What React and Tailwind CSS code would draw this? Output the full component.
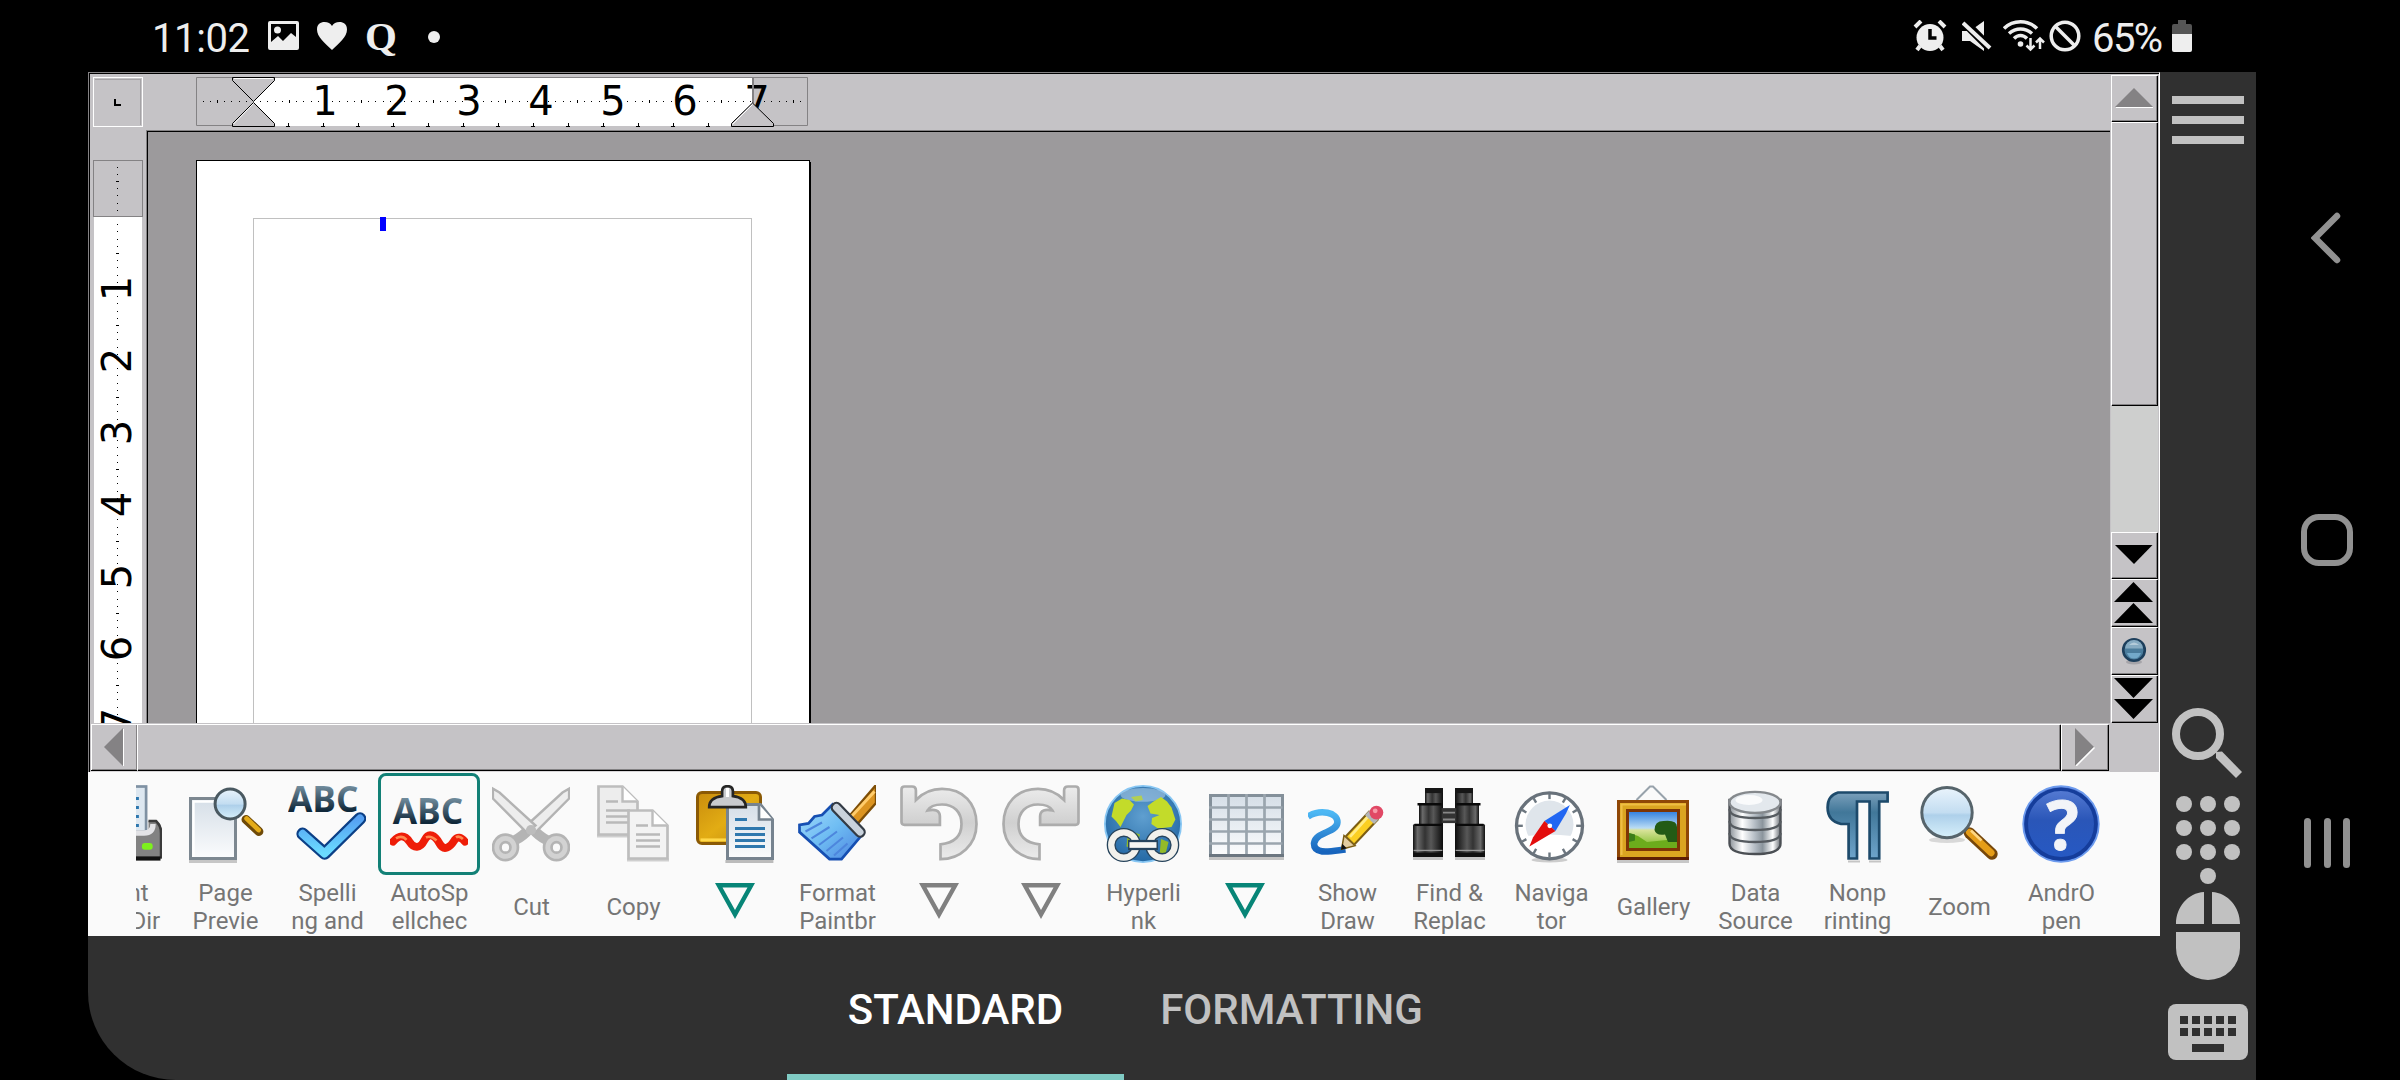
import React from "react";

const range = (n) => Array.from({ length: n }, (_, i) => i);

/* ---------- status bar ---------- */

function StatusBar() {
  return (
    <div className="flex h-[72px] w-full shrink-0 items-center pl-[152px] pr-[64px] text-[40px] leading-none text-[#eeeeee]">
      <span className="mt-[5px] w-[98px] tracking-[-0.4px]">11:02</span>
      <svg className="ml-[17px]" width="33" height="30" viewBox="0 0 33 30">
        <path fillRule="evenodd" fill="#eee" d="M3 0h27q2 0 2 2v25q0 2-2 2H3q-2 0-2-2V2q0-2 2-2zM4 3v18l7-6 5 5 8-8 5 4V3z" />
        <circle cx="10.500" cy="9" r="3.500" fill="#eee" />
      </svg>
      <svg className="ml-[16px]" width="32" height="30" viewBox="0 0 32 30">
        <path fill="#eee" d="M16 29C9 22 1 16 1 8.500C1 3 4.500 1 8.500 1c3.500 0 6 1.500 7.500 4C17.500 2.500 20 1 23.500 1 27.500 1 31 3 31 8.500 31 16 23 22 16 29z" />
      </svg>
      <span className="ml-[17px] w-[34px] font-['Liberation_Serif'] text-[41px] font-bold leading-none text-[#eeeeee]">Q</span>
      <span className="ml-[29px] mt-px h-[12px] w-[12px] rounded-full bg-[#eeeeee]" />
      <div className="flex-1" />
      <svg width="34" height="32" viewBox="0 0 34 32">
        <circle cx="17" cy="17.500" r="13.500" fill="#eee" />
        <path d="M2 7l6-6M26 1l6 6M7 26l-3 4M27 26l3 4" stroke="#eee" strokeWidth="4" />
        <path d="M17 9v9h6.500" stroke="#000" strokeWidth="3.500" fill="none" />
      </svg>
      <svg className="ml-[15px]" width="30" height="32" viewBox="0 0 30 32">
        <path fill="#eee" d="M0 11h8L22 1v30L8 21H0z" />
        <path d="M0 0l29 29" stroke="#000" strokeWidth="9" />
        <path d="M1 3l27 25" stroke="#eee" strokeWidth="4" />
      </svg>
      <svg className="ml-[11px]" width="42" height="32" viewBox="0 0 42 32">
        <g fill="none" stroke="#eee" strokeWidth="3.500">
          <path d="M1 8.500C10-.5 25-.5 34 8.500" />
          <path d="M6 13.500c7-6 16-6 23 0" />
          <path d="M11 18.500c4-4 9-4 13 0" />
        </g>
        <circle cx="17.500" cy="24" r="2.800" fill="#eee" />
        <g fill="none" stroke="#eee" strokeWidth="2.500">
          <path d="M27.500 18v11M23.500 25.500l4 4 4-4" />
          <path d="M37 29V19M33 22.500l4-4 4 4" />
        </g>
      </svg>
      <svg className="ml-[4px]" width="32" height="32" viewBox="0 0 32 32">
        <circle cx="16" cy="16" r="13.800" fill="none" stroke="#eee" strokeWidth="3.500" />
        <path d="M6 6l20 20" stroke="#eee" strokeWidth="3.500" />
      </svg>
      <span className="ml-[11px] mt-[5px] w-[73px] tracking-[-1.600px]">65%</span>
      <svg className="ml-[7px]" width="20" height="32" viewBox="0 0 20 32">
        <path fill="#555" d="M6 0h8v4h4q2 0 2 2v8H0V6q0-2 2-2h4z" />
        <path fill="#eee" d="M0 14h20v16q0 2-2 2H2q-2 0-2-2z" />
      </svg>
    </div>
  );
}

/* ---------- rulers ---------- */

function HorizontalRuler() {
  return (
    <svg className="ml-[53px] mt-[3px]" width="613" height="50" viewBox="196 77 613 50">
      <path d="M196.500 77.500H807.500V125.500H196.500z" fill="none" stroke="#848284" />
      <rect x="253" y="78" width="499" height="48" fill="#fff" />
      <rect x="752" y="77" width="2" height="26" fill="#848284" />
      {range(85).map((i) => {
        const k = i - 7;
        if (k % 10 === 0) return null;
        const half = Math.abs(k % 10) === 5;
        const x = Math.round(253 + k * 7.2);
        if (x > 806) return null;
        return <rect key={i} x={x} y={half ? 100 : 101} width="1" height={half ? 3 : 1} fill="#000" />;
      })}
      <g fontFamily="DejaVu Sans" fontSize="40" textAnchor="middle" fill="#000">
        {range(7).map((i) => (
          <text key={i} x={325 + i * 72} y="115">{i + 1}</text>
        ))}
      </g>
      <rect x="752" y="77" width="2" height="26" fill="#848284" />
      {range(14).map((i) => (
        <path key={i} d={`M${Math.round(286 + i * 35)} 126.500h4M${Math.round(286 + i * 35) + 2.5} 123v3`} stroke="#000" />
      ))}
      <g fill="#c5c3c6" stroke="#000">
        <path d="M232.500 77.500H274.500V80.500L253.500 101.500 232.500 80.500z" />
        <path d="M253.500 102.500L274.500 123.500V126.500H232.500V123.500z" />
        <path d="M752.500 103L773.500 123.500V126.500H731.500V123.500z" />
      </g>
      <path d="M234 78.500H273M253.500 103.500L233.500 124M752.500 104.500L732.500 124.500" stroke="#fff" fill="none" />
    </svg>
  );
}

function VerticalRuler() {
  return (
    <div className="h-[593px] w-[56px] shrink-0 overflow-hidden bg-[#c5c3c6] pl-[3px] pt-[30px]">
      <svg width="50" height="563" viewBox="93 160 50 563">
        <rect x="94" y="216" width="48" height="520" fill="#fff" />
        <rect x="93.500" y="160.500" width="49" height="56" fill="#c5c3c6" stroke="#848284" />
        {range(78).map((i) => {
          const k = i - 7;
          if (k % 10 === 0) return null;
          const half = Math.abs(k % 10) === 5;
          const y = Math.round(217 + k * 7.2);
          return <rect key={i} x={half ? 116 : 117} y={y} width={half ? 3 : 1} height="1" fill="#000" />;
        })}
        <g fontFamily="DejaVu Sans" fontSize="40" textAnchor="middle" fill="#000">
          {range(7).map((i) => (
            <text key={i} transform={`translate(131 ${288.5 + i * 72}) rotate(-90)`}>{i + 1}</text>
          ))}
        </g>
      </svg>
    </div>
  );
}

/* ---------- scroll bars ---------- */

const bevel =
  "flex shrink-0 items-center justify-center border-t border-l border-t-white border-l-white bg-[#c5c3c6] shadow-[inset_-1px_-1px_0_#848284,1px_1px_0_#000] pr-[2px]";

function VerticalScrollbar() {
  return (
    <div className="flex h-[698px] w-[49px] shrink-0 flex-col bg-[#c5c3c6] pl-[1px]">
      <div className={`${bevel} mt-[1px] h-[46px] w-[46px] pb-[1px]`}>
        <svg width="40" height="20" viewBox="0 0 40 20"><path d="M20 0L39 19H1z" fill="#848284" /><path d="M2 19.500h37" stroke="#fff" /></svg>
      </div>
      <div className={`${bevel} mt-[1px] h-[283px] w-[46px]`} />
      <div className="mt-[1px] h-[126px] w-[47px] shrink-0 bg-[#cecfce]" />
      <div className={`${bevel} h-[46px] w-[46px] pb-[2px]`}>
        <svg width="40" height="20" viewBox="0 0 40 20"><path d="M1 0H38.500L20 19z" fill="#000" /></svg>
      </div>
      <div className={`${bevel} mt-[1px] h-[47px] w-[46px]`}>
        <svg width="40" height="42" viewBox="0 0 40 42"><path d="M19.500 0L39 20H0zM19.500 21L39 41H0z" fill="#000" /></svg>
      </div>
      <div className={`${bevel} mt-[1px] h-[47px] w-[46px]`}>
        <svg width="26" height="28" viewBox="0 0 26 28">
          <ellipse cx="13" cy="25" rx="8" ry="2.500" fill="#a5a4a9" />
          <circle cx="13" cy="13" r="10.800" fill="#4a7c9c" stroke="#1d3f5c" strokeWidth="2.600" />
          <path d="M4 11.500a9 8.500 0 0 1 18 0z" fill="#86abc2" />
          <path d="M8 8q5-5 10 0z" fill="#b3cbd9" />
          <path d="M6 16h14q-2 5.500-7 5.500t-7-5.500z" fill="#73a9ca" />
        </svg>
      </div>
      <div className={`${bevel} mt-[1px] h-[47px] w-[46px]`}>
        <svg width="40" height="42" viewBox="0 0 40 42"><path d="M0 0H39L19.500 20zM0 21H39L19.500 41z" fill="#000" /></svg>
      </div>
    </div>
  );
}

function HorizontalScrollbar() {
  return (
    <div className="flex h-[48px] w-[2020px] shrink-0 border-t border-[#c5c3c6] bg-[#c5c3c6] pl-[1px]">
      <div className="flex h-[46px] w-[46px] shrink-0 items-center justify-center border-l border-t border-white pb-[2px] pr-[2px] shadow-[inset_-1px_-1px_0_#848284,0_1px_0_#000]">
        <svg width="22" height="38" viewBox="0 0 22 38"><path d="M1 19L20 0V38z" fill="#848284" /><path d="M20.500 1v37" stroke="#fff" /></svg>
      </div>
      <div className="h-[46px] w-[1923px] shrink-0 border-l border-t border-white shadow-[inset_-1px_-1px_0_#848284,1px_1px_0_#000]" />
      <div className="ml-[1px] flex h-[46px] w-[47px] shrink-0 items-center justify-center border-l border-t border-white pb-[2px] shadow-[inset_-1px_-1px_0_#848284,1px_1px_0_#000]">
        <svg className="mr-[1px]" width="22" height="38" viewBox="0 0 22 38"><path d="M1 0L20 19 1 38z" fill="#848284" /><path d="M2 38L20.500 19.500" stroke="#fff" strokeWidth="1.500" /></svg>
      </div>
    </div>
  );
}

/* ---------- document ---------- */

function Workspace() {
  return (
    <div className="h-[700px] w-[2072px] shrink-0 border-l border-r border-t border-l-[#848284] border-r-white border-t-[#848284]">
      <div className="flex h-[699px] w-[2070px] border-l border-t border-black bg-[#c5c3c6]">
        <div className="flex h-[698px] w-[2020px] shrink-0 flex-col overflow-hidden">
          <div className="flex h-[56px] w-full shrink-0">
            <div className="ml-[3px] mt-[3px] flex h-[50px] w-[50px] items-center justify-center border border-white p-px">
              <div className="flex h-full w-full items-center justify-center border-r border-t border-[#a5a3a6]">
                <span className="h-[7px] w-[7px] border-b-2 border-l-2 border-black" />
              </div>
            </div>
            <HorizontalRuler />
          </div>
          <div className="flex h-[593px] w-full shrink-0">
            <VerticalRuler />
            <div className="h-[593px] w-[1964px] shrink-0 border-l border-t border-[#848284]">
              <div className="h-[592px] w-full overflow-hidden border-l border-t border-black bg-[#9c9a9c] pl-[48px] pt-[28px]">
                <div className="h-[900px] w-[614px] border border-black bg-white pl-[56px] pt-[57px] shadow-[1px_2px_0_#000]">
                  <div className="h-[800px] w-[499px] border border-[#c0c0c0]">
                    <div className="-mt-[2px] ml-[126px] h-[14px] w-[6px] bg-[#0000ff]" />
                  </div>
                </div>
              </div>
            </div>
          </div>
          <HorizontalScrollbar />
          <div className="h-px w-full bg-[#d8d6d8]" />
        </div>
        <VerticalScrollbar />
      </div>
    </div>
  );
}

/* ---------- toolbar icons, on a 26 unit grid ---------- */

function Icon({ children }) {
  return (
    <svg width="78" height="78" viewBox="0 0 26 26" className="overflow-hidden">
      {children}
    </svg>
  );
}

function Abc({ y, x = 0 }) {
  return (
    <text x={x} y={y} fontFamily="Open Sans" fontWeight="700" fontSize="12.200" textLength="23.500" lengthAdjust="spacingAndGlyphs" fill="url(#abcFill)">ABC</text>
  );
}

function Defs() {
  return (
    <svg width="0" height="0" className="absolute">
      <defs>
        <linearGradient id="abcFill" x1="0" y1="0" x2="0" y2="1"><stop offset=".2" stopColor="#7d99aa" /><stop offset=".75" stopColor="#10283a" /></linearGradient>
        <linearGradient id="paper" x1="0" y1="0" x2="0" y2="1"><stop offset="0" stopColor="#d5dee7" /><stop offset="1" stopColor="#fbfcfd" /></linearGradient>
        <linearGradient id="lens" x1="0" y1="0" x2="0" y2="1"><stop offset="0" stopColor="#eaf4fc" /><stop offset=".5" stopColor="#c3ddf1" /><stop offset=".55" stopColor="#aed0ea" /><stop offset="1" stopColor="#d7f0fb" /></linearGradient>
        <linearGradient id="check" x1="0" y1="0" x2="0" y2="1"><stop offset="0" stopColor="#55a0f2" /><stop offset="1" stopColor="#6bdcff" /></linearGradient>
        <linearGradient id="gold" x1="0" y1="0" x2="1" y2="1"><stop offset="0" stopColor="#c98d0d" /><stop offset=".5" stopColor="#e2ac14" /><stop offset="1" stopColor="#c08a10" /></linearGradient>
        <linearGradient id="brush" x1="0" y1="0" x2="1" y2="1"><stop offset="0" stopColor="#a5dbfb" /><stop offset=".5" stopColor="#6fbdf3" /><stop offset="1" stopColor="#4b83df" /></linearGradient>
        <linearGradient id="arrow" x1="0" y1="0" x2="0" y2="1"><stop offset="0" stopColor="#ececec" /><stop offset=".5" stopColor="#d0d0d0" /><stop offset="1" stopColor="#ebebeb" /></linearGradient>
        <radialGradient id="globe" cx=".5" cy=".4" r=".6"><stop offset="0" stopColor="#5f9fd0" /><stop offset="1" stopColor="#2469a5" /></radialGradient>
        <linearGradient id="squiggle" x1="0" y1="0" x2="0" y2="1"><stop offset="0" stopColor="#4db8f4" /><stop offset="1" stopColor="#1764bd" /></linearGradient>
        <linearGradient id="barrel" x1="0" y1="0" x2="1" y2="0"><stop offset="0" stopColor="#111" /><stop offset=".15" stopColor="#6a6a6a" /><stop offset=".4" stopColor="#333" /><stop offset=".6" stopColor="#585858" /><stop offset="1" stopColor="#0c0c0c" /></linearGradient>
        <linearGradient id="metal" x1="0" y1="0" x2="1" y2="0"><stop offset="0" stopColor="#8b9299" /><stop offset=".25" stopColor="#fff" /><stop offset=".5" stopColor="#b4bcc4" /><stop offset=".65" stopColor="#8a949c" /><stop offset=".85" stopColor="#fff" /><stop offset="1" stopColor="#6b7076" /></linearGradient>
        <linearGradient id="sky" x1="0" y1="0" x2="0" y2="1"><stop offset="0" stopColor="#2b7be0" /><stop offset=".45" stopColor="#b9dcf4" /><stop offset=".5" stopColor="#d9e39a" /><stop offset="1" stopColor="#74b81c" /></linearGradient>
        <linearGradient id="pilcrow" x1="0" y1="0" x2="0" y2="1"><stop offset="0" stopColor="#7ba0bb" /><stop offset=".3" stopColor="#417799" /><stop offset="1" stopColor="#6ea4cb" /></linearGradient>
        <linearGradient id="help" x1="0" y1="0" x2="0" y2="1"><stop offset="0" stopColor="#5a7fd6" /><stop offset=".45" stopColor="#2a56b8" /><stop offset="1" stopColor="#2659c4" /></linearGradient>
      </defs>
    </svg>
  );
}

const PrintIcon = () => (
  <Icon>
    <rect x="6" y=".5" width="14.700" height="15" fill="#dde7f0" stroke="#7f91a3" strokeWidth=".9" />
    <path d="M9 4.500h9.300M9 7.500h9.300M9 10.500h9.300M9 13.500h9.300" stroke="#2d77ae" />
    <path d="M1 16.500h20.500V12H24q2 1 2 4v8.500H1z" fill="#828282" />
    <path d="M21.500 12H24q1.700 1.500 1.700 4v8.500" stroke="#3a3a3a" strokeWidth=".9" fill="none" />
    <path d="M2 16h18q3 0 3-3" stroke="#e3e3e6" strokeWidth="1.800" fill="none" />
    <rect x="0" y="23.800" width="25.500" height="1.400" fill="#111" />
    <rect x="19.300" y="19.300" width="3.600" height="2.300" rx="1" fill="#7df01d" />
  </Icon>
);

const PreviewIcon = () => (
  <Icon>
    <rect x="1" y="25" width="16" height="1" fill="#c6c6c6" />
    <rect x="1.500" y="4.500" width="15" height="20" fill="url(#paper)" stroke="#7c8790" />
    <path d="M2.500 24V5.500H16" stroke="#fff" strokeWidth=".8" fill="none" />
    <path d="M20 11.500l4.300 4" stroke="#6f4a08" strokeWidth="3" strokeLinecap="round" />
    <path d="M20.200 11.200l4 3.800" stroke="#e4ab18" strokeWidth="1.600" strokeLinecap="round" />
    <circle cx="14.700" cy="6.300" r="5" fill="url(#lens)" stroke="#4a5961" />
  </Icon>
);

const SpellingIcon = () => (
  <Icon>
    <Abc y="9" />
    <path d="M4.900 16.300L12.200 22.800 24 11.200" stroke="#0b3f86" strokeWidth="4.200" fill="none" strokeLinecap="round" strokeLinejoin="round" />
    <path d="M4.900 16.300L12.200 22.800 24 11.200" stroke="url(#check)" strokeWidth="2.700" fill="none" strokeLinecap="round" strokeLinejoin="round" />
  </Icon>
);

const AutoSpellIcon = () => (
  <Icon>
    <Abc y="13" x=".9" />
    <path d="M1 18.900C3 16.500 5 16.500 6.500 18.900S10 21.300 11.500 18.400S15 16.800 16.500 19.500S20 20.800 21.500 18.400Q23 16.500 25 18.900" stroke="#ee1d08" strokeWidth="2.600" fill="none" strokeLinecap="round" />
    <path d="M2 17.800Q4 16.600 5.500 18.300M12 17.500Q13.500 16.700 15.500 18.500M22 17.500Q23 16.800 24.300 18" stroke="#ff8a50" strokeWidth=".9" fill="none" />
  </Icon>
);

const CutIcon = () => (
  <Icon>
    <g fill="none" stroke="#b4b4b4" strokeWidth="3.400">
      <ellipse cx="4.500" cy="20.800" rx="2.900" ry="3" />
      <ellipse cx="21.500" cy="20.800" rx="2.900" ry="3" />
      <path d="M12.500 14.500Q10.500 17 7.500 18.500M13.500 14.500Q15.500 17 18.500 18.500" />
    </g>
    <g fill="none" stroke="#d2d2d2" strokeWidth="1.600">
      <ellipse cx="4.500" cy="20.800" rx="2.900" ry="3" />
      <ellipse cx="21.500" cy="20.800" rx="2.900" ry="3" />
    </g>
    <path d="M25.700 1.200V4.500L14.500 15.800 11.500 13.500 23.500 2.500z" fill="#ededed" stroke="#b3b3b3" strokeWidth=".8" />
    <path d="M.3 1.200V4.500L11.500 15.800 14.500 13.500 2.500 2.500z" fill="#ededed" stroke="#b3b3b3" strokeWidth=".8" />
    <circle cx="13" cy="15" r="1.700" fill="#bcbcbc" />
  </Icon>
);

function Sheet({ x, y, w, h, edge, text, fill }) {
  const ear = 5;
  return (
    <g>
      <rect x={x - 0.500} y={y + h} width={w + 1} height="1" fill="#cfcfcf" />
      <path d={`M${x} ${y}h${w - ear}l${ear} ${ear}v${h - ear}h${-w}z`} fill={fill} stroke={edge} strokeWidth=".9" />
      <path d={`M${x + w - ear} ${y}v${ear}h${ear}`} fill="#fff" stroke={edge} strokeWidth=".8" />
      <path d={`M${x + 2.500} ${y + 5}h4M${x + 2.500} ${y + 8}h${w - 5}M${x + 2.500} ${y + 10}h${w - 5}M${x + 2.500} ${y + 12}h${w - 5}`} stroke={text} strokeWidth=".9" />
    </g>
  );
}

const CopyIcon = () => (
  <Icon>
    <Sheet x={1.500} y={0.500} w={13} h={16} edge="#bdbdbd" text="#b9b9b9" fill="#ededed" />
    <Sheet x={11.500} y={8.500} w={13} h={16} edge="#bdbdbd" text="#b9b9b9" fill="#f3f3f3" />
  </Icon>
);

const PasteIcon = () => (
  <Icon>
    <rect x=".5" y="2.500" width="21" height="17" rx="1.500" fill="url(#gold)" stroke="#8b5a05" />
    <path d="M1.500 18.300h9" stroke="#ffd84a" />
    <rect x="9.800" y="25" width="16" height="1" fill="#bbb" />
    <path d="M10.500 6.500h11l4 5v13h-15z" fill="url(#paper)" stroke="#76838f" />
    <path d="M21 6.500v5h4.500" fill="#fff" stroke="#76838f" strokeWidth=".9" />
    <path d="M13 11.500h4M13 14.500h10M13 16.500h10M13 18.500h10M13 20.500h10" stroke="#2f78ae" />
    <path d="M8.700 2.200Q8.700.4 10.500.4t1.800 1.800v1.500q4.300.5 4.300 3.700H4.400q0-3.200 4.300-3.700z" fill="#c9cbce" stroke="#252525" strokeWidth=".9" />
    <path d="M10.500 1v3" stroke="#fff" strokeWidth="1" />
  </Icon>
);

const BrushIcon = () => (
  <Icon>
    <path d="M17 10.500L26 0V6L19.800 13z" fill="#dc9420" stroke="#7e4e06" strokeWidth=".8" />
    <path d="M17.800 10.500L25.500 2.200" stroke="#ffcc6b" strokeWidth="1" />
    <path d="M11.500 6.500L21 17 14.500 24.700H10.500L.5 15.700V13.300L3.500 12.800 5.500 10.500 8 10z" fill="url(#brush)" stroke="#164fb2" strokeWidth=".9" />
    <path d="M2.500 15.500L8 12.500M4.500 17.800L10.500 14M7 20L13 15.500M9.500 22L15 17.500M12 23.500L16.500 19.500" stroke="#4d86dd" strokeWidth=".7" />
    <path d="M12.800 7.500L20.700 15.700" stroke="#333b45" strokeWidth="3.800" strokeLinecap="round" />
    <path d="M12.800 7.500L20.700 15.700" stroke="#c9d2dc" strokeWidth="2.300" strokeLinecap="round" />
  </Icon>
);

const UndoShape = () => (
  <path
    d="M.5 1.500Q.5.500 1.500.500H4Q5.300.500 5.300 1.800V5C8 2.200 11 1.300 14 1.300C21 1.300 25.500 6 25.500 13C25.500 20 20 24.700 13.500 24.700V19.800C18 19.300 20.500 17 20.500 13C20.500 9 18 6.500 14 6.500C11.500 6.500 10 7 9.200 8.500C11.500 8 13.300 8.300 13.300 10.500V13.300H1.500Q.5 13.300.5 12.300z"
    fill="url(#arrow)" stroke="#acacac" strokeWidth=".9"
  />
);
const UndoIcon = () => <Icon><UndoShape /></Icon>;
const RedoIcon = () => <Icon><g transform="translate(26 0) scale(-1 1)"><UndoShape /></g></Icon>;

const LinkIcon = () => (
  <Icon>
    <circle cx="13" cy="13" r="12.700" fill="url(#globe)" stroke="#87c6f3" strokeWidth=".6" />
    <ellipse cx="13" cy="3.300" rx="7.500" ry="2.300" fill="#a9c9e4" opacity=".6" />
    <path d="M3.500 6L6 4.500 8.500 5 10 6.500 9 8.500 7.500 10 6.500 12 5.500 14 4 12 2.500 10.500z" fill="#c3db2a" />
    <path d="M9 4L12.500 3.500 13 5 10.500 5.500z" fill="#b3cf52" />
    <path d="M16.500 5.500L19 4 21 5.500 22.500 7.500 23.800 11.500 22.500 14 18 14.500 15.800 13 16 11 18.500 10 15.500 9.500 14.500 7z" fill="#c3db2a" />
    <path d="M8 15l4 1.500-1.500 5-3-1z" fill="#93bb28" />
    <path d="M19 18l2.500 1-1 4-2 .5z" fill="#93bb28" />
    <g fill="none" stroke="#27445c" strokeWidth="3">
      <circle cx="6.600" cy="20" r="4.200" /><circle cx="19.400" cy="20" r="4.200" />
    </g>
    <g fill="none" stroke="#f2f1ec" strokeWidth="2.100">
      <circle cx="6.600" cy="20" r="4.200" /><circle cx="19.400" cy="20" r="4.200" />
    </g>
    <path d="M8 20h10" stroke="#27445c" strokeWidth="3.400" />
    <path d="M8.500 20h9" stroke="#f6f6f2" strokeWidth="1.900" />
  </Icon>
);

const TableIcon = () => (
  <Icon>
    <rect x="1" y="24" width="25" height="1" fill="#c4c4c4" />
    <rect x="1.500" y="3.500" width="24" height="20" fill="url(#paper)" stroke="#84909a" />
    <path d="M1 7.500h24.500M1 11.500h24.500M1 15.500h24.500M1 19.500h24.500M7.500 3v21M13.500 3v21M19.500 3v21" stroke="#9aa5ae" strokeWidth=".9" />
    <path d="M1 23.500h25" stroke="#6b7680" />
  </Icon>
);

const DrawIcon = () => (
  <Icon>
    <path d="M0 10.500C4 8 10 9 9.800 12.500C9.600 16 2.500 15.500 2 19.500C2 23.500 8 22 12.500 21.500" fill="none" stroke="url(#squiggle)" strokeWidth="2.200" />
    <path d="M14 18.500L22 10" stroke="#7b5d13" strokeWidth="4.600" />
    <path d="M14.200 18.300L21.500 10.500" stroke="#fbcf22" strokeWidth="3.200" />
    <path d="M14 17.300L20.500 10" stroke="#ffec86" strokeWidth=".9" />
    <path d="M11.200 21.400L12 16.800 15.700 20.200z" fill="#e3cda0" stroke="#7b5d13" strokeWidth=".5" />
    <path d="M11 21.600l.4-2 1.500 1.500z" fill="#111" />
    <path d="M20.500 11.500l1.400-1.400" stroke="#b3b6b8" strokeWidth="4.300" />
    <circle cx="22.800" cy="9.200" r="2.300" fill="#e14865" />
    <circle cx="22.400" cy="8.600" r=".8" fill="#f79aa9" />
  </Icon>
);

const Barrel = () => (
  <g>
    <rect x="5" y="1" width="6" height="5.500" fill="url(#barrel)" />
    <rect x="5" y="1" width="6" height="1.700" fill="#161616" />
    <rect x="3" y="6" width="8" height="7.500" fill="url(#barrel)" />
    <rect x="1" y="13" width="10" height="11" rx=".5" fill="url(#barrel)" />
    <path d="M2.500 6.400h8M1.500 13.300h9" stroke="#090909" strokeWidth=".8" />
    <path d="M1.200 21.800h9.600" stroke="#999" strokeWidth=".4" />
    <rect x="1" y="22.500" width="10" height="1.500" fill="#101010" />
    <rect x="1" y="24" width="10" height="1" fill="#c5c5c5" />
  </g>
);
const FindIcon = () => (
  <Icon>
    <Barrel />
    <g transform="translate(26 0) scale(-1 1)"><Barrel /></g>
    <path d="M10.500 7.700h5v5h-5z" fill="#333" />
    <path d="M11 9.200h4M11 11.500h4" stroke="#888" strokeWidth=".6" />
  </Icon>
);

const CompassIcon = () => (
  <Icon>
    <ellipse cx="12.500" cy="25" rx="6" ry=".8" fill="#ccc" />
    <circle cx="12.500" cy="13.600" r="11" fill="#fff" stroke="#69727b" strokeWidth="1.100" />
    <circle cx="12.500" cy="13.200" r="8" fill="#dfe5eb" />
    <path d="M5 17q7-1 15 0-2 5-7.500 5T5 17z" fill="#fff" />
    {range(12).map((i) => (
      <path key={i} d="M12.500 3v1.700" stroke="#6d7780" strokeWidth=".8" transform={`rotate(${i * 30} 12.500 13.600)`} />
    ))}
    <path d="M19.300 6.700L18 9.500 14.500 15.300 10.800 12z" fill="#2166f2" />
    <path d="M5.800 20.500L7 17.500 10.800 12 14.500 15.300z" fill="#e30d0d" />
    <circle cx="12.600" cy="13.600" r=".8" fill="#fff" />
  </Icon>
);

const GalleryIcon = () => (
  <Icon>
    <path d="M7.500 5L12 .5 13 .5 17.500 5" fill="none" stroke="#97a2ab" strokeWidth=".7" />
    <rect x="1" y="25" width="24" height="1" fill="#c7c7c7" />
    <rect x="1.500" y="5.500" width="23" height="19" fill="#dba521" stroke="#8f4706" />
    <path d="M2.500 23.300V6.500H24" fill="none" stroke="#efbe45" strokeWidth=".7" />
    <path d="M1 24.500h24" stroke="#5e1e03" />
    <rect x="4.500" y="8.500" width="17" height="13" fill="url(#sky)" stroke="#7d3505" />
    <path d="M5 16l3 1 3 2 10-1v3H5z" fill="#6cac1c" />
    <path d="M13.500 15q0-3 3-3 4.500-.5 4.500 2v5h-3l-1-2.500q-3 .5-3.500-1.500z" fill="#235b15" />
    <path d="M5 16l2 .5v2L5 19z" fill="#3c7d19" />
  </Icon>
);

const DataIcon = () => (
  <Icon>
    <path d="M4.500 5v14.500q0 3.500 8.500 3.500t8.500-3.500V5z" fill="url(#metal)" stroke="#4b4f54" strokeWidth=".8" />
    <path d="M4.500 8q0 3 8.500 3t8.500-3M4.500 12q0 3 8.500 3t8.500-3M4.500 16q0 3 8.500 3t8.500-3" fill="none" stroke="#565b60" strokeWidth=".8" />
    <ellipse cx="13" cy="5.800" rx="8.500" ry="3.500" fill="#e3e8ed" stroke="#85898d" strokeWidth=".8" />
    <ellipse cx="11" cy="5" rx="4.500" ry="1.700" fill="#fafbfc" />
  </Icon>
);

const PilcrowIcon = () => (
  <Icon>
    <path d="M7 2.500H23.500V5.500H20.700V24.500H17.500V5.500H13.300V24.500H10.500V13H8Q3.500 12 3.500 7.500 3.500 3.500 7 2.500z" transform="translate(-.3 0)" fill="url(#pilcrow)" stroke="#1d4a6b" strokeWidth=".9" />
    <path d="M10 25.500h4M17 25.500h4" stroke="#c5c5c5" strokeWidth=".7" />
  </Icon>
);

const ZoomIcon = () => (
  <Icon>
    <ellipse cx="9" cy="18.300" rx="6" ry="1" fill="#d8d8d8" />
    <path d="M16.500 16L24 23" stroke="#76470a" strokeWidth="3.800" strokeLinecap="round" />
    <path d="M16.500 15.800L23.700 22.600" stroke="#e59d18" strokeWidth="2.300" strokeLinecap="round" />
    <path d="M17 15.200L20.500 18.500" stroke="#ffd781" strokeWidth=".9" />
    <circle cx="9" cy="9.200" r="8.400" fill="url(#lens)" stroke="#56646b" />
  </Icon>
);

const HelpIcon = () => (
  <Icon>
    <circle cx="13" cy="13" r="12.600" fill="url(#help)" stroke="#6d9bee" strokeWidth=".6" />
    <circle cx="13" cy="13" r="11.600" fill="none" stroke="#153d9b" strokeWidth="1.200" />
    <text x="13.500" y="21.700" fontFamily="Open Sans" fontWeight="700" fontSize="22.500" textAnchor="middle" fill="#f2f4f8" stroke="#f2f4f8" strokeWidth=".3">?</text>
  </Icon>
);

function DropTriangle({ on }) {
  return (
    <svg width="40" height="37" viewBox="0 0 40 37" className="-mt-[11px]">
      <path fillRule="evenodd" fill={on ? "#078577" : "#808080"} d="M0 0H40L20 36zM7.500 4.500L20 27 32.500 4.500z" />
    </svg>
  );
}

const tools = [
  { icon: PrintIcon, lines: ["Print", "File Dir"] },
  { icon: PreviewIcon, lines: ["Page", "Previe"] },
  { icon: SpellingIcon, lines: ["Spelli", "ng and"] },
  { icon: AutoSpellIcon, lines: ["AutoSp", "ellchec"], active: true },
  { icon: CutIcon, lines: ["Cut"] },
  { icon: CopyIcon, lines: ["Copy"] },
  { icon: PasteIcon, drop: "on" },
  { icon: BrushIcon, lines: ["Format", "Paintbr"] },
  { icon: UndoIcon, drop: "off" },
  { icon: RedoIcon, drop: "off" },
  { icon: LinkIcon, lines: ["Hyperli", "nk"] },
  { icon: TableIcon, drop: "on" },
  { icon: DrawIcon, lines: ["Show", "Draw"] },
  { icon: FindIcon, lines: ["Find &", "Replac"] },
  { icon: CompassIcon, lines: ["Naviga", "tor"] },
  { icon: GalleryIcon, lines: ["Gallery"] },
  { icon: DataIcon, lines: ["Data", "Source"] },
  { icon: PilcrowIcon, lines: ["Nonp", "rinting"] },
  { icon: ZoomIcon, lines: ["Zoom"] },
  { icon: HelpIcon, lines: ["AndrO", "pen"] },
];

function Toolbar() {
  return (
    <div className="h-[164px] w-[2072px] shrink-0 bg-[#fafafa] px-[48px]">
      <div className="flex h-full w-full justify-end overflow-hidden pt-[1px]">
        {tools.map(({ icon: Glyph, lines, active, drop }, i) => (
          <div key={i} className="flex w-[102px] shrink-0 flex-col items-center">
            <div className={`flex h-[102px] w-[102px] shrink-0 items-center justify-center rounded-[8px] border-[3px] ${active ? "border-[#128076]" : "border-transparent"}`}>
              <Glyph />
            </div>
            <div className="mt-[4px] flex h-[56px] shrink-0 flex-col items-center justify-center text-[24px] leading-[28px] text-[#757575]">
              {drop ? <DropTriangle on={drop === "on"} /> : lines.map((l) => <span key={l} className="whitespace-nowrap pl-px">{l}</span>)}
            </div>
          </div>
        ))}
      </div>
    </div>
  );
}

/* ---------- tabs, side panel, system keys ---------- */

function Tabs() {
  return (
    <div className="flex h-[144px] w-[2072px] shrink-0 pl-[699px] text-[42px] font-medium">
      <div className="flex w-[337px] items-center justify-center border-b-[6px] border-[#80cbc4] pt-[8px] text-white">STANDARD</div>
      <div className="flex w-[335px] items-center justify-center border-b-[6px] border-transparent pt-[8px] text-[#c1c1c1]">FORMATTING</div>
    </div>
  );
}

function SidePanel() {
  return (
    <div className="flex h-[1008px] w-[96px] shrink-0 flex-col items-center bg-[#303030] pt-[24px]">
      <div className="flex flex-col gap-[12px]">
        {range(3).map((i) => <div key={i} className="h-[8px] w-[72px] bg-[#c1c1c1]" />)}
      </div>
      <svg className="mt-[564px] shrink-0" width="72" height="72" viewBox="2172 708 72 72">
        <circle cx="2198" cy="734" r="22" fill="none" stroke="#c1c1c1" strokeWidth="8" />
        <path fill="#c1c1c1" d="M2216 752l6-.5 20 20.500-6 6-20-20z" />
      </svg>
      <div className="mt-[16px] grid shrink-0 grid-cols-3 gap-[8px]">
        {range(9).map((i) => <div key={i} className="h-[16px] w-[16px] rounded-full bg-[#c1c1c1]" />)}
      </div>
      <div className="mt-[8px] h-[16px] w-[16px] shrink-0 rounded-full bg-[#c1c1c1]" />
      <svg className="mt-[8px] shrink-0" width="64" height="88" viewBox="0 0 64 88">
        <path fill="#c1c1c1" d="M0 32C0 15 12 1 28 0V32zM64 32C64 15 52 1 36 0V32zM0 40H64V56a32 32 0 0 1-64 0z" />
      </svg>
      <svg className="mt-[24px] shrink-0" width="80" height="56" viewBox="0 0 80 56">
        <rect width="80" height="56" rx="8" fill="#c1c1c1" />
        {range(10).map((i) => <rect key={i} x={12 + (i % 5) * 12} y={i < 5 ? 12 : 24} width="8" height="8" fill="#303030" />)}
        <rect x="24" y="40" width="32" height="8" fill="#303030" />
      </svg>
    </div>
  );
}

function SystemKeys() {
  return (
    <div className="flex h-[1080px] w-[144px] shrink-0 flex-col items-center pt-[212px]">
      <svg className="mr-[2px]" width="32" height="52" viewBox="0 0 32 52">
        <path d="M26 4L4 26 26 48" fill="none" stroke="#919191" strokeWidth="6.500" strokeLinecap="round" />
      </svg>
      <div className="-ml-[2px] mt-[250px] h-[52px] w-[52px] rounded-[18px] border-[6.5px] border-[#919191]" />
      <div className="-ml-[2px] mt-[252px] flex gap-[12.500px]">
        {range(3).map((i) => <div key={i} className="h-[50px] w-[7px] rounded-full bg-[#919191]" />)}
      </div>
    </div>
  );
}

export default function App() {
  return (
    <div className="flex h-[1080px] w-[2400px] overflow-hidden bg-black font-['Roboto',sans-serif]">
      <Defs />
      <div className="flex w-[2256px] shrink-0 flex-col">
        <StatusBar />
        <div className="ml-[88px] flex h-[1008px] w-[2168px] overflow-hidden rounded-bl-[88px] bg-[#303030]">
          <div className="flex w-[2072px] shrink-0 flex-col">
            <Workspace />
            <Toolbar />
            <Tabs />
          </div>
          <SidePanel />
        </div>
      </div>
      <SystemKeys />
    </div>
  );
}
